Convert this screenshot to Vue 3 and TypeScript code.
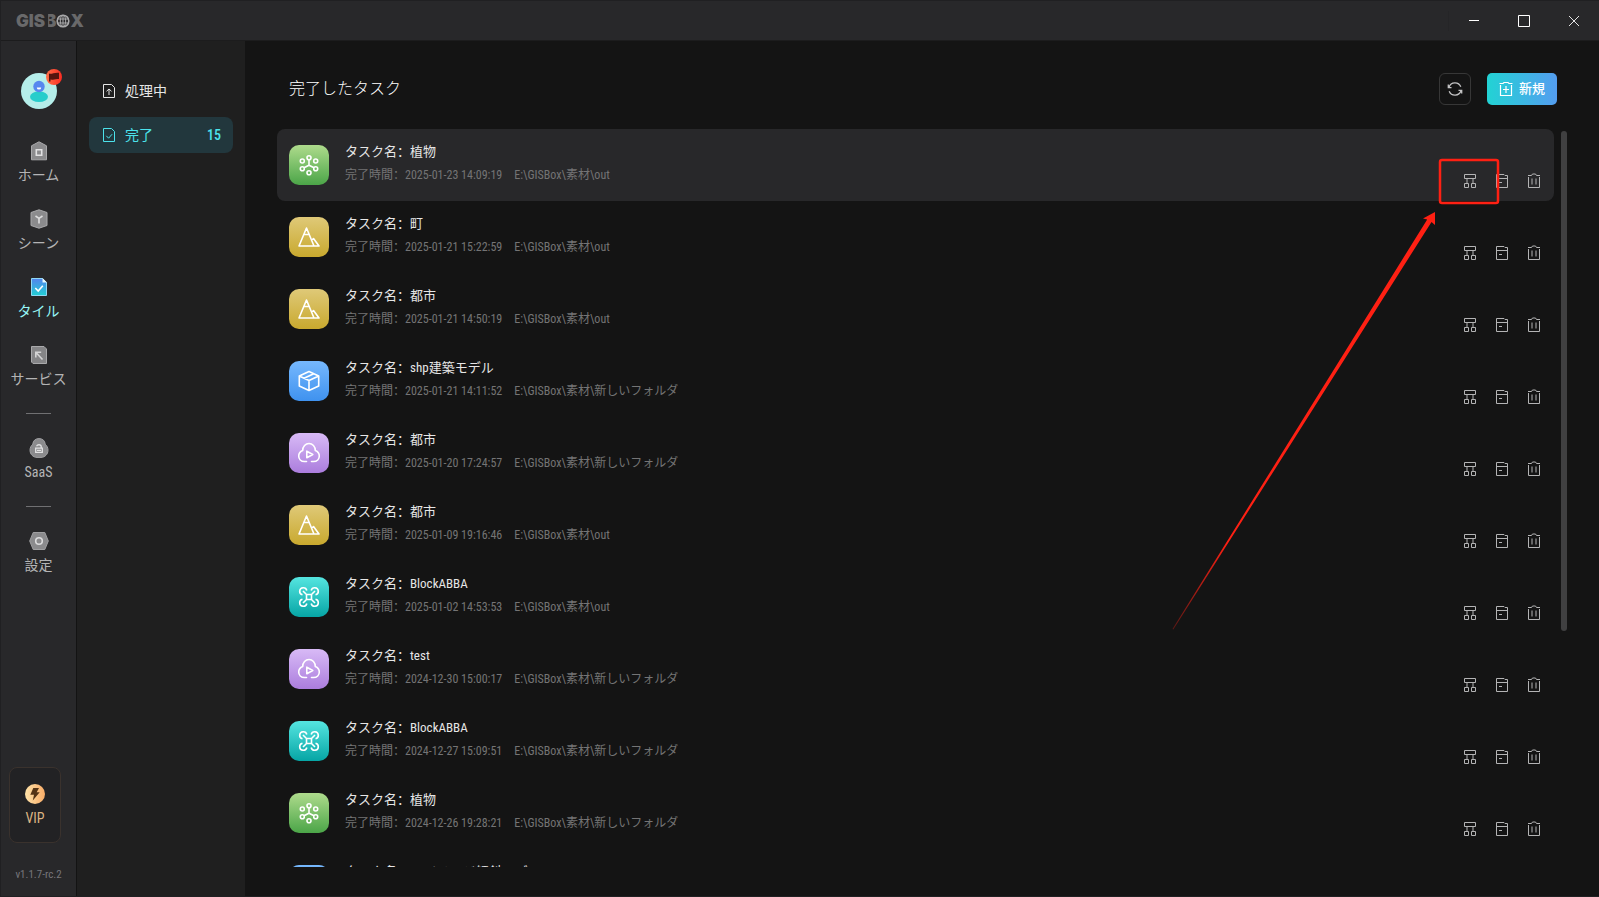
<script setup lang="ts">
import { ref } from 'vue'

type Kind = 'plant' | 'terrain' | 'model' | 'cloud' | 'drone'

interface Task {
  name: string
  time: string
  path: string
  kind: Kind
}

const out = 'E:\\GISBox\\素材\\out'
const folder = 'E:\\GISBox\\素材\\新しいフォルダ'

const tasks: Task[] = [
  { name: '植物', time: '2025-01-23 14:09:19', path: out, kind: 'plant' },
  { name: '町', time: '2025-01-21 15:22:59', path: out, kind: 'terrain' },
  { name: '都市', time: '2025-01-21 14:50:19', path: out, kind: 'terrain' },
  { name: 'shp建築モデル', time: '2025-01-21 14:11:52', path: folder, kind: 'model' },
  { name: '都市', time: '2025-01-20 17:24:57', path: folder, kind: 'cloud' },
  { name: '都市', time: '2025-01-09 19:16:46', path: out, kind: 'terrain' },
  { name: 'BlockABBA', time: '2025-01-02 14:53:53', path: out, kind: 'drone' },
  { name: 'test', time: '2024-12-30 15:00:17', path: folder, kind: 'cloud' },
  { name: 'BlockABBA', time: '2024-12-27 15:09:51', path: folder, kind: 'drone' },
  { name: '植物', time: '2024-12-26 19:28:21', path: folder, kind: 'plant' },
  { name: '3Dイメージ傾斜モデル', time: '2024-12-26 18:02:35', path: folder, kind: 'model' },
]

const selected = ref(0)
</script>

<template>
  <div class="app">
    <header class="titlebar">
      <div class="logo" aria-label="GISBOX">
        <span>GIS</span><span class="logo-b">B</span>
        <svg width="14" height="14" viewBox="0 0 14 14" fill="none" stroke="#a9a9aa">
          <circle cx="7" cy="7" r="5.8" stroke-width="1.6" />
          <ellipse cx="7" cy="7" rx="2.7" ry="5.8" />
          <path d="M7 1v12M1.5 5h11M1.5 9h11" />
        </svg>
        <span>X</span>
      </div>
      <div class="window-controls">
        <button aria-label="最小化">
          <svg width="14" height="14" viewBox="0 0 14 14" stroke="#fff"><path d="M2 6.5h10" /></svg>
        </button>
        <button aria-label="最大化">
          <svg width="14" height="14" viewBox="0 0 14 14" stroke="#fff" fill="none"><path d="M1.5 1.5h11v11h-11z" /></svg>
        </button>
        <button aria-label="閉じる">
          <svg width="14" height="14" viewBox="0 0 14 14" stroke="#e4e4e4"><path d="M2 2l10 10M12 2L2 12" /></svg>
        </button>
      </div>
    </header>

    <div class="body">
      <nav class="sidebar">
        <a class="avatar" href="#" aria-label="アカウント">
          <svg width="36" height="36" viewBox="0 0 36 36">
            <circle cx="18" cy="18" r="18" fill="#b5eeea" />
            <ellipse cx="18" cy="23.7" rx="9" ry="5.4" fill="#26cdcb" />
            <circle cx="18" cy="13.5" r="5.7" fill="#5787ef" />
            <path d="M15.8 14.4h4.4a2.2 2.2 0 0 1-4.4 0z" fill="#fff" />
          </svg>
          <svg class="flag" width="16" height="16" viewBox="0 0 16 16">
            <defs>
              <linearGradient id="flag-fill" x1="0" x2="1"><stop stop-color="#ff7048" /><stop offset="1" stop-color="#fb2c22" /></linearGradient>
            </defs>
            <circle cx="8" cy="8" r="8" fill="url(#flag-fill)" />
            <path d="M3 4.6c2.5 1 5-1.300 10-.8v6.200c-4-.6-6 1.300-8.500 .6V12.500H3z" fill="#55150f" />
          </svg>
        </a>

        <a class="nav-item" href="#">
          <svg width="20" height="20" viewBox="0 0 20 20">
            <path d="M10 .8l7.500 4v14H2.500v-14z" fill="#8b8b8d" stroke="#a9a9ab" />
            <path d="M7.300 8.800h5.400v5.400H7.300z" fill="none" stroke="#e2e2e3" stroke-width="1.600" />
          </svg>
          <span>ホーム</span>
        </a>
        <a class="nav-item" href="#">
          <svg width="20" height="20" viewBox="0 0 20 20">
            <path d="M10 .8l8 2.700v13l-8 2.700-8-2.700v-13z" fill="#8b8b8d" stroke="#a9a9ab" />
            <path d="M6.500 7l3.500 2.300L13.500 7M10 9.300V14.500" fill="none" stroke="#dededf" stroke-width="1.600" />
          </svg>
          <span>シーン</span>
        </a>
        <a class="nav-item current" href="#" aria-current="page">
          <svg width="20" height="20" viewBox="0 0 20 20">
            <defs>
              <linearGradient id="tile-fill" x2="0" y2="1"><stop stop-color="#5384ee" /><stop offset="1" stop-color="#22d0d4" /></linearGradient>
            </defs>
            <path d="M2.500 1.500h11l4 4v13h-15z" fill="url(#tile-fill)" stroke="#8fd8f5" />
            <path d="M13.500 1v4.500H18z" fill="#e8fbff" />
            <path d="M6.300 11l2.900 3 4.600-5.200" fill="none" stroke="#fff" stroke-width="1.600" />
          </svg>
          <span>タイル</span>
        </a>
        <a class="nav-item" href="#">
          <svg width="20" height="20" viewBox="0 0 20 20">
            <path d="M2.500 1.500h12.500l2.500 2.500v14.500H4L2.500 17z" fill="#858587" stroke="#a9a9ab" />
            <path d="M13.500 14.500L7 7.500M6.800 12.500V7.300h5.400" fill="none" stroke="#d4d4d5" stroke-width="1.600" />
          </svg>
          <span>サービス</span>
        </a>
        <hr />
        <a class="nav-item" href="#">
          <svg width="20" height="20" viewBox="0 0 20 20">
            <path d="M10 .6c3.600 0 6 2.200 6.200 5.600 1.800 1.500 2.800 3.700 2.800 6 0 4-3.100 7.200-7 7.200H8c-3.900 0-7-3.200-7-7.200 0-2.300 1-4.500 2.800-6C4 2.800 6.400 .6 10 .6z" fill="#8b8b8d" stroke="#a0a0a2" />
            <path d="M6.700 10.200h6.600v4.200H6.700zM8 12.300h4M7.800 8.200c0-2 4.400-2 4.400 .4v1.500" fill="none" stroke="#e2e2e3" stroke-width="1.300" />
          </svg>
          <span>SaaS</span>
        </a>
        <hr />
        <a class="nav-item" href="#">
          <svg width="20" height="20" viewBox="0 0 20 20">
            <path d="M4.200 1.500h11.600l3.500 8.500-3.500 8.500H4.200L.7 10z" fill="#8b8b8d" stroke="#a0a0a2" />
            <circle cx="10" cy="10" r="3.300" fill="none" stroke="#dcdcdd" stroke-width="1.600" />
          </svg>
          <span>設定</span>
        </a>

        <button class="vip">
          <svg width="20" height="20" viewBox="0 0 20 20">
            <defs>
              <linearGradient id="vip-fill" x1="0" x2="1"><stop stop-color="#ffe3a9" /><stop offset="1" stop-color="#f9ac67" /></linearGradient>
            </defs>
            <circle cx="10" cy="10" r="10" fill="url(#vip-fill)" />
            <path d="M8.300 4h5.700l-2.300 4.300h3L7.800 16.500l1.200-5.700H5.300z" fill="#553415" />
          </svg>
          <span>VIP</span>
        </button>
        <small class="version">v1.1.7-rc.2</small>
      </nav>

      <aside class="panel">
        <button class="filter">
          <svg width="14" height="14" viewBox="0 0 14 14" fill="none" stroke="currentColor">
            <path d="M1.500 .5h8l3 3v10h-11zM7 11V5M4.500 7.300L7 5l2.500 2.300" />
          </svg>
          <span>処理中</span>
        </button>
        <button class="filter active">
          <svg width="14" height="14" viewBox="0 0 14 14" fill="none" stroke="currentColor">
            <path d="M1.500 .5h8l3 3v10h-11zM4.300 7.800l2.300 2.400 3.500-4" />
          </svg>
          <span>完了</span>
          <b>15</b>
        </button>
      </aside>

      <main class="main">
        <div class="main-head">
          <h1>完了したタスク</h1>
          <button class="refresh" aria-label="更新">
            <svg width="16" height="16" viewBox="0 0 16 16" fill="none" stroke="#c4c4c5" stroke-width="1.300">
              <path d="M2 6.200a6.300 6.300 0 0 1 11.800-.4M14 9.800a6.300 6.300 0 0 1-11.800 .4M1.300 3.500v3.200h3.200M14.700 12.500V9.300h-3.200" />
            </svg>
          </button>
          <button class="create">
            <svg width="14" height="16" viewBox="0 0 14 16" fill="none" stroke="#fff">
              <path d="M1.500 4v10.500h11V4M.5 2.500h3.500L5 1.500h4l1 1h3.500M7 5v7M4 8.500h6" stroke-width="1.200" />
            </svg>
            <span>新規</span>
          </button>
        </div>

        <div class="list-wrap">
          <ul class="list">
            <li
              v-for="(task, i) in tasks"
              :key="i"
              class="task"
              :class="{ selected: i === selected }"
              @click="selected = i"
            >
              <svg class="kind" :class="task.kind" width="40" height="40" viewBox="-20 -20 40 40" fill="none" stroke="#fff" stroke-width="1.600">
                <g v-if="task.kind === 'plant'">
                  <circle cx="0" cy="-7.300" r="2" />
                  <circle cx="-6.700" cy="-4" r="2" />
                  <circle cx="6.700" cy="-4" r="2" />
                  <circle cx="-6.700" cy="3.700" r="2" />
                  <circle cx="6.700" cy="3.700" r="2" />
                  <circle cx="0" cy="7.700" r="2" />
                  <path d="M0-5.300V.2M-5 2.700L0 .2 5 2.700" />
                </g>
                <g v-else-if="task.kind === 'terrain'" stroke-linejoin="round">
                  <path d="M-10 9L-2.500-9 5 9zM-5.500-2.500H.5M2.500 3.500L4.500 1.500 10 9H5" />
                </g>
                <g v-else-if="task.kind === 'model'" stroke-linejoin="round">
                  <path d="M0-9.500L9.700-5V5L0 9.500-9.700 5V-5zM-9.700-5L0-.5 9.700-5M0-.5v10M-5-2.800L4.800-7.300" />
                </g>
                <g v-else-if="task.kind === 'cloud'" stroke-linecap="round" stroke-linejoin="round">
                  <path d="M-2.500 8.500h-2C-8 8.500-10.300 6-10.300 3c0-2.700 1.500-4.500 4-5.500C-6.300-6.500-3.500-9.500 0-9.500s6.300 3 6.300 7c2.500 1 4 2.800 4 5.500 0 3-2.300 5.500-5.800 5.500h-2" />
                  <path d="M-2.200-1.800v6.600L3.800 1.500z" />
                </g>
                <g v-else>
                  <path d="M-2.500-2.500h5v5h-5zM-2.500-2.500L-6-6M2.500-2.500L6-6M-2.500 2.500L-6 6M2.500 2.500L6 6" />
                  <path d="M-6.500-2.200A3.600 3.600 0 1 1-2.200-6.500M6.500-2.200A3.600 3.600 0 1 0 2.200-6.500M-6.500 2.200A3.600 3.600 0 1 0-2.200 6.500M6.500 2.200A3.600 3.600 0 1 1 2.200 6.500" />
                </g>
              </svg>
              <div class="info">
                <p class="name">タスク名：<span>{{ task.name }}</span></p>
                <p class="meta"><span>完了時間：{{ task.time }}</span><span>{{ task.path }}</span></p>
              </div>
              <div class="actions">
                <button aria-label="公開">
                  <svg width="16" height="16" viewBox="0 0 16 16" fill="none" stroke="currentColor">
                    <path d="M2.500 1.500h11v4h-11zM2.500 10.500h4v4h-4zM9.500 10.500h4v4h-4zM5 5.500v5M11 5.500v5" />
                  </svg>
                </button>
                <button aria-label="フォルダを開く">
                  <svg width="16" height="16" viewBox="0 0 16 16" fill="none" stroke="currentColor">
                    <path d="M2.500 1.500h7.500l1 1h2.500v12h-11zM2.500 5.500h11M5 9.500h3" />
                  </svg>
                </button>
                <button aria-label="削除">
                  <svg width="16" height="16" viewBox="0 0 16 16" fill="none" stroke="currentColor">
                    <path d="M2.500 4v10.500h11V4M2 2.500h3.500L6.500 1h3l1 1.500H14M6 5.500v6M10 5.500v6" />
                  </svg>
                </button>
              </div>
            </li>
          </ul>
          <div class="track"><div class="thumb"></div></div>
        </div>

        <svg class="callout" width="330" height="480" viewBox="0 0 330 480" aria-hidden="true">
          <defs>
            <linearGradient id="tail" gradientUnits="userSpaceOnUse" x1="2" y1="472" x2="58" y2="384">
              <stop stop-color="#ff2013" stop-opacity="0.300" /><stop offset="1" stop-color="#ff2013" />
            </linearGradient>
          </defs>
          <rect x="270" y="2" width="58" height="43" rx="2" fill="none" stroke="#ff2013" stroke-width="2.500" />
          <path d="M2.500 471L257.200 61.500 253 60.500 265 54v13l-3.500-3L3.300 471.500z" fill="url(#tail)" />
        </svg>
      </main>
    </div>
  </div>
</template>

<style>
body {
  margin: 0;
  background: #141414;
}
</style>

<style scoped>
.app {
  display: flex;
  flex-direction: column;
  height: 100vh;
  box-sizing: border-box;
  border: 1px solid #202022;
  border-right: 0;
  overflow: hidden;
  background: #141414;
  color: #e6e6e6;
  font-family: 'Roboto Condensed', 'Noto Sans CJK SC', 'Noto Sans CJK JP', sans-serif;
  font-size: 14px;
  line-height: 20px;
}

button {
  margin: 0;
  padding: 0;
  border: 0;
  background: none;
  color: inherit;
  font: inherit;
  cursor: pointer;
}

svg {
  display: block;
  flex: none;
}

.titlebar {
  display: flex;
  flex: none;
  align-items: center;
  justify-content: space-between;
  height: 39px;
  padding-left: 15px;
  border-bottom: 1px solid #1c1c1d;
  background: #28282a;
}

.logo {
  display: flex;
  align-items: center;
  color: #69696a;
  font-family: Inter, sans-serif;
  font-size: 17px;
  font-weight: 900;
}

.logo-b {
  clip-path: inset(0 0 0 3px);
}

.window-controls {
  display: flex;
  border-left: 1px solid #252527;
}

.window-controls button {
  display: grid;
  place-items: center;
  width: 50px;
  height: 20px;
}

.body {
  display: flex;
  flex: 1;
  min-height: 0;
}

.sidebar {
  display: flex;
  flex: none;
  flex-direction: column;
  align-items: center;
  gap: 24px;
  width: 75px;
  box-sizing: content-box;
  padding-top: 32px;
  border-right: 1px solid #131313;
  background: #28282a;
}

.avatar {
  position: relative;
  margin-bottom: 8px;
}

.flag {
  position: absolute;
  top: -4px;
  right: -5px;
}

.nav-item {
  display: flex;
  flex-direction: column;
  align-items: center;
  gap: 4px;
  color: #b4b4b5;
  text-decoration: none;
}

.nav-item.current {
  color: #96f6f6;
}

.sidebar hr {
  width: 25px;
  height: 1px;
  margin: 0;
  border: 0;
  background: #707072;
}

.vip {
  display: flex;
  flex-direction: column;
  align-items: center;
  align-self: flex-start;
  gap: 4px;
  width: 52px;
  margin-top: auto;
  margin-left: 8px;
  padding: 16px 0 14px;
  border: 1px solid #3a322d;
  border-radius: 8px;
  background: #222224;
  color: #dcb483;
}

.version {
  margin-bottom: 13px;
  color: #77777b;
  font-size: 11px;
  line-height: 16px;
}

.panel {
  display: flex;
  flex: none;
  flex-direction: column;
  gap: 8px;
  width: 168px;
  box-sizing: border-box;
  padding: 32px 12px;
  background: #1f1f1f;
}

.filter {
  display: flex;
  align-items: center;
  gap: 9px;
  height: 36px;
  padding: 0 12px 0 13px;
  border-radius: 8px;
  text-align: left;
}

.filter.active {
  background: #22373d;
  color: #4ce3ec;
}

.filter b {
  margin-left: auto;
  font-weight: 500;
}

.main {
  position: relative;
  display: flex;
  flex: 1;
  flex-direction: column;
  gap: 24px;
  min-width: 0;
  padding: 32px 32px 29px;
}

.main-head {
  display: flex;
  align-items: center;
  gap: 16px;
  padding: 0 10px 0 12px;
}

h1 {
  flex: 1;
  margin: 0;
  color: #fff;
  font-size: 16px;
  font-weight: 300;
}

.refresh {
  display: grid;
  place-items: center;
  width: 32px;
  height: 32px;
  border: 1px solid #373737;
  border-radius: 6px;
}

.create {
  display: flex;
  align-items: center;
  justify-content: center;
  gap: 6px;
  width: 70px;
  height: 32px;
  border-radius: 5px;
  background: linear-gradient(90deg, #22d3d4, #549df0);
  color: #fff;
  font-size: 13px;
  font-weight: 500;
}

.list-wrap {
  display: flex;
  flex: 1;
  gap: 7px;
  min-height: 0;
}

.list {
  flex: 1;
  min-width: 0;
  margin: 0;
  padding: 0;
  overflow: hidden;
  list-style: none;
}

.track {
  width: 6px;
  padding-top: 2px;
}

.thumb {
  height: 68%;
  border-radius: 3px;
  background: #404041;
}

.task {
  display: flex;
  gap: 16px;
  height: 72px;
  box-sizing: border-box;
  padding: 13px 10px 10px 12px;
  border-radius: 8px;
}

.task.selected {
  background: #28282a;
}

.kind {
  margin-top: 3px;
  border-radius: 10px;
}

.plant {
  background: linear-gradient(#aedb8c, #4ba548);
}

.terrain {
  background: linear-gradient(#dfc978, #c9a92e);
}

.model {
  background: linear-gradient(#76b8fd, #3f92ef);
}

.cloud {
  background: linear-gradient(#d8baf6, #ab7ddd);
}

.drone {
  background: linear-gradient(#55e5e0, #06a5a5);
}

.info {
  display: flex;
  flex: 1;
  flex-direction: column;
  gap: 3px;
  min-width: 0;
  white-space: nowrap;
}

.info p {
  margin: 0;
}

.name {
  font-size: 13px;
}

.meta {
  display: flex;
  gap: 12px;
  color: #747475;
  font-size: 12px;
}

.actions {
  display: flex;
  gap: 12px;
  align-self: flex-end;
  color: #b4b4b5;
}

.actions button {
  display: grid;
  place-items: center;
  width: 20px;
  height: 20px;
}

.callout {
  position: absolute;
  top: 117px;
  right: 99px;
  pointer-events: none;
}
</style>
